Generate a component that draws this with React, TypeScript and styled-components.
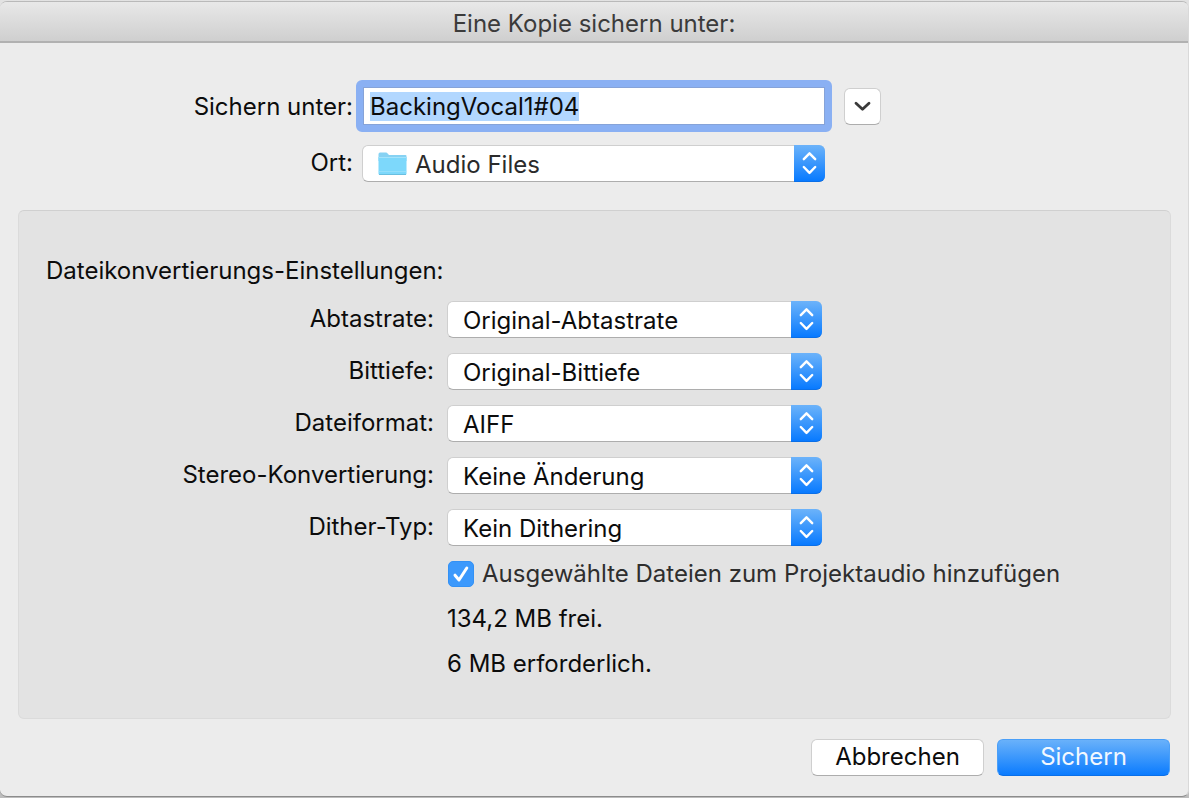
import React, { useEffect, useRef } from "react";
import styled, { createGlobalStyle, css } from "styled-components";

const GlobalStyle = createGlobalStyle`
  *, *::before, *::after { box-sizing: border-box; }
  body {
    margin: 0;
    background: linear-gradient(#e2e2e2, #bdbdbd);
    font-family: Inter, "Liberation Sans", sans-serif;
    font-size: 24px;
    line-height: 30px;
    color: #0c0c0c;
  }
  input, select, button { font: inherit; color: inherit; }
`;

const Backdrop = styled.div`
  display: flex;
  min-height: 100vh;
  padding: 1px 0;
`;

const Dialog = styled.form`
  flex: 1;
  min-width: 0;
  display: flex;
  flex-direction: column;
  background: #ececec;
  border-top: 1px solid #b9b9b9;
  border-bottom: 1px solid #8c8c8c;
  border-right: 1px solid #d9d9d9;
  border-radius: 7px;
  overflow: hidden;
`;

const TitleBar = styled.header`
  height: 41px;
  display: flex;
  align-items: center;
  justify-content: center;
  padding-top: 5px;
  background: linear-gradient(#e8e8e8, #cfcfcf);
  border-bottom: 2px solid #b1b1b1;
`;

const Title = styled.h1`
  margin: 0;
  font-size: 24px;
  font-weight: 400;
  color: #3b3b3b;
`;

const Destination = styled.section`
  display: grid;
  grid-template-columns: 1fr minmax(0, 476px) 1fr;
  row-gap: 13px;
  align-items: center;
  padding: 37px 0 28px;
`;

const Label = styled.label<{ $raised?: boolean; $gap: number }>`
  justify-self: end;
  white-space: nowrap;
  padding-right: ${(p) => p.$gap}px;
  padding-top: ${(p) => (p.$raised ? 0 : 2)}px;
  padding-bottom: ${(p) => (p.$raised ? 2 : 0)}px;
`;

const NameInput = styled.input`
  width: 100%;
  height: 52px;
  padding: 0 7px;
  border: 7px solid #8ab0f3;
  border-radius: 6px;
  outline: none;
  background: #fff;
  box-shadow: inset 0 0 0 1px #86a3d8;
  &::selection { background: #b2d7ff; color: #0c0c0c; }
`;

const raisedFace = css`
  background: #fff;
  border: 1px solid #cfcfcf;
  border-bottom-color: #adadad;
  border-radius: 6px;
`;

const blueFace = css`
  background: linear-gradient(#6cb3fa, #3b97fc 50%, #087aff);
`;

const DiscloseButton = styled.button`
  ${raisedFace}
  display: grid;
  place-items: center;
  width: 37px;
  height: 37px;
  margin-left: 12px;
  padding: 0;
`;

const PopUp = styled.div<{ $inset?: boolean }>`
  position: relative;
  height: 37px;
  margin: ${(p) => (p.$inset ? "0 7px 0 6px" : "0")};
`;

const Select = styled.select<{ $icon?: boolean }>`
  ${raisedFace}
  appearance: none;
  display: block;
  width: 100%;
  height: 37px;
  padding: 2px 40px 0 ${(p) => (p.$icon ? 52 : 15)}px;
  outline: none;
  color: ${(p) => (p.$icon ? "#2b2b2b" : "#0c0c0c")};
`;

const Stepper = styled.span`
  ${blueFace}
  position: absolute;
  top: 0;
  right: 0;
  bottom: 0;
  width: 31px;
  display: grid;
  place-items: center;
  border-radius: 0 6px 6px 0;
  border-bottom: 1px solid #0a6fe8;
  pointer-events: none;
`;

const FolderBadge = styled.span`
  position: absolute;
  left: 16px;
  top: 6px;
  display: flex;
  pointer-events: none;
`;

const Panel = styled.section`
  flex: 1;
  margin: 0 17px 0 18px;
  padding: 45px 27px 36px;
  background: #e3e3e3;
  border: 1px solid #dbdbdb;
  border-top-color: #d0d0d0;
  border-radius: 6px;
`;

const PanelHeading = styled.h2`
  margin: 0 0 15px;
  font-size: 24px;
  font-weight: 400;
`;

const Settings = styled.div`
  display: grid;
  grid-template-columns: 401px minmax(0, 375px);
  row-gap: 15px;
  align-items: center;
`;

const Notes = styled.div`
  display: flex;
  flex-direction: column;
  gap: 15px;
  padding: 13px 0 0 401px;
`;

const CheckLabel = styled.label`
  display: flex;
  align-items: center;
  gap: 8px;
  padding-left: 1px;
  color: #2e2e2e;
  white-space: nowrap;
`;

const CheckBoxHolder = styled.span`
  display: grid;
  width: 26px;
  height: 26px;
`;

const CheckBox = styled.input`
  grid-area: 1 / 1;
  appearance: none;
  width: 26px;
  height: 26px;
  margin: 0;
  border: 1px solid #d0d0d0;
  border-radius: 5px;
  background: #fff;
  &:checked {
    border-color: #3391f5;
    background: #3c99fc;
  }
  &:not(:checked) + svg { visibility: hidden; }
`;

const CheckMark = styled.svg`
  grid-area: 1 / 1;
  pointer-events: none;
`;

const Note = styled.p`
  margin: 0;
`;

const Footer = styled.footer`
  display: flex;
  justify-content: flex-end;
  gap: 13px;
  padding: 20px 18px;
`;

const Button = styled.button<{ $primary?: boolean }>`
  ${raisedFace}
  width: 173px;
  height: 37px;
  padding: 0 0 2px;
  ${(p) =>
    p.$primary &&
    css`
      ${blueFace}
      background-origin: border-box;
      border-color: #4a9ff8;
      border-bottom-color: #0a6fe8;
      color: #f2f8ff;
    `}
`;

const Arrows = () => (
  <svg width="15" height="24" viewBox="0 0 15 24" fill="none" stroke="#fff" strokeWidth="2.4" strokeLinecap="round" strokeLinejoin="round">
    <path d="M1.800 8.200 7.500 2.300 13.200 8.200M1.800 16 7.500 21.900 13.200 16" />
  </svg>
);

const Folder = () => (
  <svg width="29" height="25" viewBox="0 0 29 25">
    <path d="M.5 3.2Q.5 1.5 2 1.5h6q1 0 1.6.9L11 4h16.500q1 0 1 1v5H.5Z" fill="#86d2f3" />
    <path d="M.5 6h28v16.500q0 1.200-1.200 1.200H1.700Q.5 23.700.5 22.500Z" fill="#7dd8fb" />
    <path d="M.5 6.500h28" stroke="#a4e3fb" />
    <path d="M.8 20.500h27.400" stroke="#95dffb" />
    <path d="M1 23.500h27" stroke="#6abfe0" />
  </svg>
);

type FieldProps = { id: string; options: string[]; icon?: boolean };

function PopUpMenu({ id, options, icon }: FieldProps) {
  return (
    <PopUp $inset={icon}>
      <Select id={id} $icon={icon}>
        {options.map((o) => (
          <option key={o}>{o}</option>
        ))}
      </Select>
      {icon && (
        <FolderBadge>
          <Folder />
        </FolderBadge>
      )}
      <Stepper>
        <Arrows />
      </Stepper>
    </PopUp>
  );
}

const settings = [
  { id: "rate", label: "Abtastrate:", value: "Original-Abtastrate" },
  { id: "depth", label: "Bittiefe:", value: "Original-Bittiefe" },
  { id: "format", label: "Dateiformat:", value: "AIFF" },
  { id: "stereo", label: "Stereo-Konvertierung:", value: "Keine Änderung" },
  { id: "dither", label: "Dither-Typ:", value: "Kein Dithering" },
];

export default function App() {
  const nameRef = useRef<HTMLInputElement>(null);

  useEffect(() => {
    nameRef.current?.focus();
    nameRef.current?.select();
  }, []);

  return (
    <>
      <GlobalStyle />
      <Backdrop>
        <Dialog onSubmit={(e) => e.preventDefault()}>
          <TitleBar>
            <Title>Eine Kopie sichern unter:</Title>
          </TitleBar>
          <Destination>
            <Label htmlFor="name" $gap={3}>Sichern unter:</Label>
            <NameInput id="name" ref={nameRef} defaultValue="BackingVocal1#04" spellCheck={false} autoComplete="off" />
            <DiscloseButton type="button" aria-label="Erweitern">
              <svg width="17" height="11" viewBox="0 0 17 11" fill="none" stroke="#3a3a3a" strokeWidth="2.8" strokeLinecap="round" strokeLinejoin="round">
                <path d="M2 2.200 8.500 8.200 15 2.200" />
              </svg>
            </DiscloseButton>
            <Label htmlFor="place" $gap={3} $raised>Ort:</Label>
            <PopUpMenu id="place" options={["Audio Files"]} icon />
          </Destination>
          <Panel>
            <PanelHeading>Dateikonvertierungs-Einstellungen:</PanelHeading>
            <Settings>
              {settings.map((s) => (
                <React.Fragment key={s.id}>
                  <Label htmlFor={s.id} $gap={13} $raised>{s.label}</Label>
                  <PopUpMenu id={s.id} options={[s.value]} />
                </React.Fragment>
              ))}
            </Settings>
            <Notes>
              <CheckLabel>
                <CheckBoxHolder>
                  <CheckBox type="checkbox" defaultChecked />
                  <CheckMark width="26" height="26" viewBox="0 0 26 26" fill="none" stroke="#fff" strokeWidth="3" strokeLinecap="round" strokeLinejoin="round">
                    <path d="M7 14.200 11 19 18.800 7" />
                  </CheckMark>
                </CheckBoxHolder>
                Ausgewählte Dateien zum Projektaudio hinzufügen
              </CheckLabel>
              <Note>134,2 MB frei.</Note>
              <Note>6 MB erforderlich.</Note>
            </Notes>
          </Panel>
          <Footer>
            <Button type="button">Abbrechen</Button>
            <Button type="submit" $primary>Sichern</Button>
          </Footer>
        </Dialog>
      </Backdrop>
    </>
  );
}
